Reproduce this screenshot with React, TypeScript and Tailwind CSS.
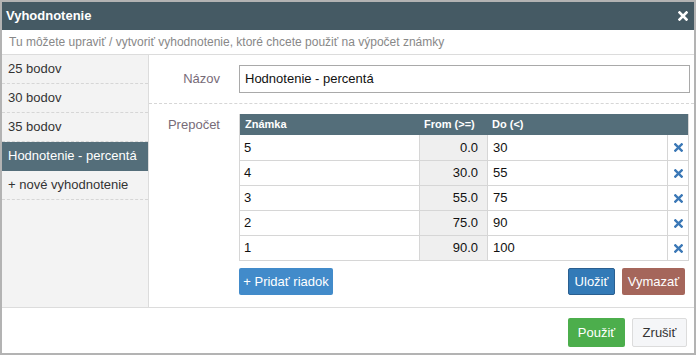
import React from "react";

const rows = [
  { grade: "5", from: "0.0", to: "30" },
  { grade: "4", from: "30.0", to: "55" },
  { grade: "3", from: "55.0", to: "75" },
  { grade: "2", from: "75.0", to: "90" },
  { grade: "1", from: "90.0", to: "100" },
];

const items = ["25 bodov", "30 bodov", "35 bodov", "Hodnotenie - percentá", "+ nové vyhodnotenie"];

function Cross({ color, size = 9 }: { color: string; size?: number }) {
  return (
    <svg width={size} height={size} viewBox="0 0 10 10">
      <path d="M1.5 1.5 L8.5 8.5 M8.5 1.5 L1.5 8.5" stroke={color} strokeWidth="2.6" strokeLinecap="square" />
    </svg>
  );
}

export default function App() {
  return (
    <div className="w-[696px] h-[355px] border-2 border-[#b3b3b3] bg-white flex flex-col text-[13px] text-[#333]" style={{ fontFamily: '"Liberation Sans", Arial, sans-serif' }}>
      <div className="h-[28px] bg-[#455a64] flex items-center justify-between pl-[4px] pr-[6px] shrink-0">
        <span className="text-white font-bold text-[13px]">Vyhodnotenie</span>
        <Cross color="#ffffff" size={10} />
      </div>

      <div className="h-[25px] border-b border-[#dcdcdc] flex items-center pl-[7px] text-[12px] text-[#888] shrink-0">
        Tu môžete upraviť / vytvoriť vyhodnotenie, ktoré chcete použiť na výpočet známky
      </div>

      <div className="flex h-[253px] border-b border-[#dcdcdc] shrink-0">
        <div className="w-[147px] bg-[#f3f3f3] border-r border-[#dcdcdc] flex flex-col">
          {items.map((it, i) => (
            <div
              key={it}
              className={
                i === 3
                  ? "h-[29px] flex items-center pl-[6px] bg-[#546e7a] text-white border-b border-dashed border-[#546e7a]"
                  : "h-[29px] flex items-center pl-[6px] border-b border-dashed border-[#d6d6d6]"
              }
            >
              {it}
            </div>
          ))}
        </div>

        <div className="flex-1 flex flex-col">
          <div className="flex items-center pt-[10px] pb-[10px] pr-[4px] border-b border-dashed border-[#d6d6d6]">
            <div className="w-[90px] text-right pr-[19px] text-[#776b78]">Názov</div>
            <div className="flex-1 h-[28px] border border-[#a9a9a9] flex items-center pl-[5px] text-[#111]">Hodnotenie - percentá</div>
          </div>

          <div className="flex pt-[10px] pr-[5px]">
            <div className="w-[90px] text-right pr-[19px] text-[#776b78] pt-[1px]">Prepočet</div>
            <div className="flex-1 flex flex-col">
              <div className="border border-[#d6d6d6] border-t-0">
                <div className="flex h-[21px] bg-[#546e7a] text-white font-bold text-[11px] items-center">
                  <div className="w-[180px] pl-[5px]">Známka</div>
                  <div className="w-[68px] pl-[4px]">From (&gt;=)</div>
                  <div className="flex-1 pl-[4px]">Do (&lt;)</div>
                </div>
                {rows.map((r, i) => (
                  <div key={r.grade} className={"flex h-[25px] text-[#111]" + (i > 0 ? " border-t border-[#d6d6d6]" : "")}>
                    <div className="w-[180px] pl-[4px] flex items-center border-r border-[#d6d6d6]">{r.grade}</div>
                    <div className="w-[68px] pr-[9px] flex items-center justify-end bg-[#efefef] border-r border-[#d6d6d6]">{r.from}</div>
                    <div className="flex-1 pl-[5px] flex items-center border-r border-[#d6d6d6]">{r.to}</div>
                    <div className="w-[20px] flex items-center justify-center">
                      <Cross color="#3b78b6" size={9} />
                    </div>
                  </div>
                ))}
              </div>
              <div className="flex items-center justify-between mt-[7px] pr-[4px]">
                <button className="h-[27px] w-[94px] bg-[#428bca] text-white rounded-[2px] text-[13px] whitespace-nowrap">+ Pridať riadok</button>
                <div className="flex gap-[7px]">
                  <button className="h-[27px] w-[47px] bg-[#337ab7] border border-[#2a5f90] text-white rounded-[2px] text-[13px]">Uložiť</button>
                  <button className="h-[27px] w-[63px] bg-[#a5665b] text-white rounded-[2px] text-[13px]">Vymazať</button>
                </div>
              </div>
            </div>
          </div>
        </div>
      </div>

      <div className="flex-1 flex justify-end items-start pt-[10px] pr-[7px] gap-[7px]">
        <button className="h-[29px] w-[57px] bg-[#4cae4c] text-white rounded-[2px] text-[13px]">Použiť</button>
        <button className="h-[29px] w-[55px] bg-[#f5f6f8] border border-[#dcdcdc] text-[#333] rounded-[2px] text-[13px]">Zrušiť</button>
      </div>
    </div>
  );
}
